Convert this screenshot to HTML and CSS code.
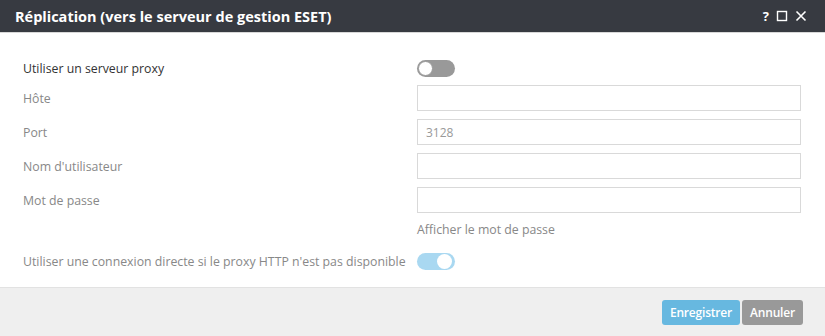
FILE: index.html
```html
<!DOCTYPE html>
<html lang="fr">
<head>
<meta charset="UTF-8">
<title>Réplication</title>
<link rel="stylesheet" href="styles.css">
</head>
<body>
<div class="dialog">
  <div class="header">
    <span class="title">Réplication (vers le serveur de gestion ESET)</span>
    <span class="tools">
      <span class="help">?</span>
      <svg class="ico" width="12" height="12" viewBox="0 0 12 12"><rect x="1.5" y="1.5" width="9" height="9" fill="none" stroke="#fff" stroke-width="1.4"/></svg>
      <svg class="ico" width="12" height="12" viewBox="0 0 12 12"><path d="M1.5 1.5 L10.5 10.5 M10.5 1.5 L1.5 10.5" stroke="#fff" stroke-width="1.6"/></svg>
    </span>
  </div>
  <div class="body">
    <div class="row toggle-row">
      <label class="lbl dark">Utiliser un serveur proxy</label>
      <span class="switch off"><span class="knob"></span></span>
    </div>
    <div class="row">
      <label class="lbl">Hôte</label>
      <input class="field" type="text">
    </div>
    <div class="row">
      <label class="lbl">Port</label>
      <input class="field" type="text" value="3128">
    </div>
    <div class="row">
      <label class="lbl">Nom d'utilisateur</label>
      <input class="field" type="text">
    </div>
    <div class="row">
      <label class="lbl">Mot de passe</label>
      <input class="field" type="password">
    </div>
    <div class="row show-row">
      <span class="lbl"></span>
      <span class="show">Afficher le mot de passe</span>
    </div>
    <div class="row toggle-row">
      <label class="lbl">Utiliser une connexion directe si le proxy HTTP n'est pas disponible</label>
      <span class="switch on"><span class="knob"></span></span>
    </div>
  </div>
  <div class="footer">
    <button class="btn save">Enregistrer</button>
    <button class="btn cancel">Annuler</button>
  </div>
</div>
</body>
</html>
```

FILE: styles.css
```css
body { margin: 0; font-family: "Open Sans", "Liberation Sans", sans-serif; background: #fff; }
.dialog { width: 825px; height: 336px; display: flex; flex-direction: column; }
.header { height: 33px; background: #373a41; color: #fff; display: flex; align-items: center; justify-content: space-between; padding: 0 18px 0 15px; border-bottom: 1px solid #d8d8d8; box-sizing: border-box; }
.title { font-size: 14.5px; font-weight: 700; }
.tools { display: flex; align-items: center; gap: 7px; }
.help { font-size: 13px; font-weight: 700; }
.ico { display: block; }
.body { flex: 1; padding: 26px 24px 0 23px; }
.row { display: flex; align-items: center; margin-bottom: 8px; }
.lbl { width: 394px; flex-shrink: 0; font-size: 12.3px; color: #888; }
.lbl.dark { color: #333; }
.field { width: 384px; height: 26px; box-sizing: border-box; border: 1px solid #d9d9d9; padding: 0 8px; font-family: inherit; font-size: 12px; color: #999; margin: 0; outline: none; }
.toggle-row { height: 18px; margin-bottom: 8px; }
.show-row { margin-top: 2px; margin-bottom: 14px; }
.show { font-size: 12.3px; color: #888; }
.switch { width: 38px; height: 17px; border-radius: 9px; position: relative; display: block; }
.switch.off { background: #999; }
.switch.on { background: #a9d8f1; }
.knob { position: absolute; top: 1px; width: 15px; height: 15px; border-radius: 50%; background: #fff; box-sizing: border-box; }
.off .knob { left: 1px; border: 1px solid #999; }
.on .knob { right: 3px; }
.footer { height: 49px; background: #efefef; border-top: 1px solid #e2e2e2; display: flex; align-items: center; justify-content: flex-end; gap: 2px; padding: 0 22px 0 0; box-sizing: border-box; }
.btn { height: 25px; border: none; border-radius: 3px; color: #fff; font-family: inherit; font-size: 12px; font-weight: 600; padding: 0 7px; letter-spacing: -0.2px; }
.save { background: #67b8e0; width: 78px; }
.cancel { background: #999; width: 61px; }
```
